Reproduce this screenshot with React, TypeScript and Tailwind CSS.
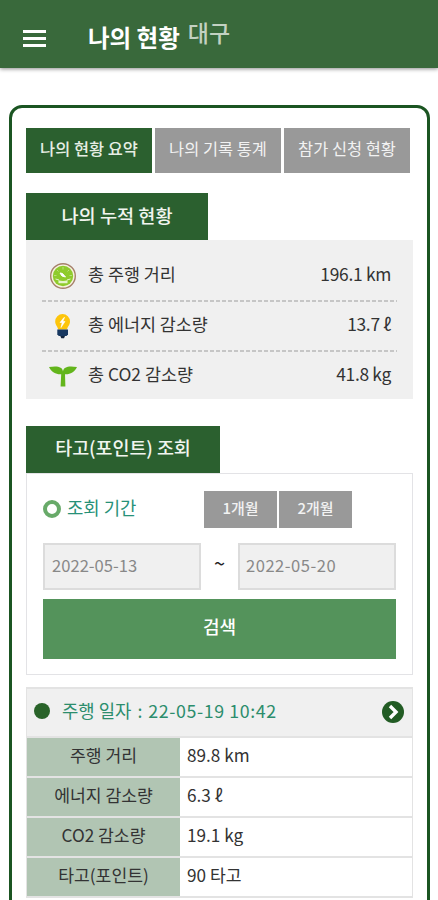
const tabs = ["나의 현황 요약", "나의 기록 통계", "참가 신청 현황"];

const record = [
    { label: "주행 거리", value: "89.8 km" },
    { label: "에너지 감소량", value: "6.3 ℓ" },
    { label: "CO2 감소량", value: "19.1 kg" },
    { label: "타고(포인트)", value: "90 타고" },
];

function GaugeIcon() {
    return (
        <svg width="28" height="28" viewBox="0 0 28 28">
            <circle cx="14" cy="14" r="12.3" fill="#f7f3df" stroke="#a5806a" strokeWidth="1.4" />
            <circle cx="14" cy="14" r="10.2" fill="#8fcb2c" />
            <path d="M14 5v2.500M8 8l1.500 1.500M20 8l-1.500 1.500M5 13.500h2.500M23 13.500h-2.500" stroke="#b9df7c" strokeWidth="1" />
            <path d="M11 11l2.500.5 3 3.500-3.500-1z" fill="#fff" stroke="#fff" />
            <path d="M9.500 18.300q4.500 1.500 9 0v3h-9z" fill="#e6f4cb" />
            <path d="M6.500 17l3.500 1M21.500 17l-3.500 1" stroke="#e6f4cb" fill="none" />
        </svg>
    )
}

function BulbIcon() {
    return (
        <svg width="28" height="28" viewBox="0 0 28 28">
            <path d="M13.500 2a7.400 7.400 0 0 0-7.300 7.400c0 3.600 2.500 4.800 3 8.100h8.800c.5-3.300 3-4.500 3-8.100A7.400 7.400 0 0 0 13.500 2z" fill="#fdc50b" />
            <path d="M15 5.500l-4 5h2.200l-1.200 5 4-6h-2.200l1.700-4z" fill="#fff" stroke="#fff" strokeWidth=".6" />
            <path d="M8.300 17.500h10.700v5l-1.500 1.500h-7.700l-1.500-1.500z" fill="#173760" />
            <path d="M11.300 24h4.700l-1 2.200h-2.700z" fill="#12243d" />
        </svg>
    )
}

function SproutIcon() {
    return (
        <svg width="28" height="28" viewBox="0 0 28 28">
            <path d="M0 5c8-1.300 13.500-.5 14 4.500.5-5 6-5.800 14-4.500-2.500 5.500-7 7.500-12 7.200l.4 12.300h-4.800l.6-12.300c-5 .3-9.700-1.700-12.200-7.200z" fill="#63b51c" />
        </svg>
    )
}

const totals = [
    { icon: <GaugeIcon />, label: "총 주행 거리", value: "196.1 km" },
    { icon: <BulbIcon />, label: "총 에너지 감소량", value: "13.7 ℓ" },
    { icon: <SproutIcon />, label: "총 CO2 감소량", value: "41.8 kg" },
];

function Header() {
    return (
        <header className="flex h-[68px] items-center bg-[#39693b] pl-[23px] text-white shadow-[0_1px_4px_rgba(0,0,0,0.45)]">
            <div className="mt-2 flex w-[23px] flex-col gap-[4px]">
                <span className="h-[3px] bg-white"></span>
                <span className="h-[3px] bg-white"></span>
                <span className="h-[3px] bg-white"></span>
            </div>
            <h1 className="ml-[42px] mt-[7px] text-[23.500px] font-bold leading-none">나의 현황</h1>
            <span className="mb-[3px] ml-[8px] text-[23px] font-medium leading-none text-[#c3d1c2]">대구</span>
        </header>
    )
}

function Summary() {
    return (
        <section>
            <h2 className="flex h-[47px] w-[182px] items-center justify-center bg-[#2b602f] pb-[4px] text-[18.600px] font-medium text-[#f1f5ef]">나의 누적 현황</h2>
            <div className="h-[159px] bg-[#f0f0f0] px-4 pt-[12px]">
                {totals.map((row, i) => (
                    <div key={row.label}>
                        <div className="flex h-[48px] items-center pl-[7px] pr-[6px] text-[17.400px] text-[#333]">
                            {row.icon}
                            <span className="mb-[3px] ml-[11px]">{row.label}</span>
                            <span className="mb-[3px] ml-auto tracking-[-0.3px]">{row.value}</span>
                        </div>
                        {i < 2 && <div className="h-[2px] bg-[repeating-linear-gradient(90deg,#c6c6c6_0_4px,transparent_4px_6px)]"></div>}
                    </div>
                ))}
            </div>
        </section>
    )
}

function Search() {
    return (
        <section className="mt-[27px]">
            <h2 className="flex h-[47px] w-[194px] items-center justify-center bg-[#2b602f] pb-[3px] text-[18.500px] font-medium tracking-[-0.1px] text-[#f1f5ef]">타고(포인트) 조회</h2>
            <div className="h-[202px] border border-[#e3e3e6] px-4 pt-[17px]">
                <div className="flex h-[37px] items-center">
                    <span className="mb-[2px] size-[18px] rounded-full border-4 border-[#68aa69]"></span>
                    <span className="mb-[4px] ml-[6px] text-[17.800px] text-[#279178]">조회 기간</span>
                    <button className="ml-auto h-full w-[73px] bg-[#999] pb-[2px] text-[15px] font-medium text-[#f2f2f2]">1개월</button>
                    <button className="ml-[2px] mr-[44px] h-full w-[73px] bg-[#999] pb-[2px] text-[15px] font-medium text-[#f2f2f2]">2개월</button>
                </div>
                <div className="mt-[15px] flex h-[47px] items-center justify-between text-[16.600px] text-[#888]">
                    <div className="flex h-full w-[158px] items-center border-2 border-[#dcdcdc] bg-[#f0f0f0] pb-[3px] pl-[7px]">2022-05-13</div>
                    <span className="mb-[7px] text-[20px] text-[#222]">~</span>
                    <div className="flex h-full w-[158px] items-center border-2 border-[#dcdcdc] bg-[#f0f0f0] pb-[3px] pl-[6px] tracking-[0.5px]">2022-05-20</div>
                </div>
                <button className="mt-[9px] h-[60px] w-[353px] bg-[#54935b] pb-[5px] text-[18px] font-medium text-white">검색</button>
            </div>
        </section>
    )
}

function Record() {
    return (
        <section className="mt-3 border border-b-2 border-t-2 border-[#e3e3e3]">
            <div className="flex h-[47px] items-center bg-[#f0f0f0] pl-[7px] pr-[8px]">
                <span className="mb-[4px] size-4 rounded-full bg-[#296329]"></span>
                <span className="mb-[4px] ml-[12px] text-[17.800px] text-[#2c8d6c]">주행 일자 <span className="mx-[2px]">:</span> <span className="tracking-[0.600px]">22-05-19 10:42</span></span>
                <svg className="mb-px ml-auto" width="22" height="22" viewBox="0 0 22 22">
                    <circle cx="11" cy="11" r="11" fill="#225c24" />
                    <path d="M8 5l6 6-6 6" fill="none" stroke="#fff" strokeWidth="3.4" />
                </svg>
            </div>
            {record.map((row) => (
                <div key={row.label} className="flex h-10 border-t-2 border-[#e3e3e3] text-[17.200px] text-[#333]">
                    <div className="flex w-[153px] items-center justify-center bg-[#b1c5b3] pb-[4px]">{row.label}</div>
                    <div className="flex items-center pb-[4px] pl-[7px]">{row.value}</div>
                </div>
            ))}
        </section>
    )
}

function App() {
    return (
        <div className="h-[900px] overflow-hidden bg-white font-['Noto_Sans_CJK_KR',sans-serif]">
            <Header />
            <main className="ml-[9px] mt-[37px] h-[900px] w-[421px] rounded-[13px] border-[3px] border-[#1b5522] pl-[14px] pr-[14px] pt-5">
                <div className="mb-5 flex h-[45px] gap-[3px]">
                    {tabs.map((tab, i) => (
                        <button key={tab} className={i === 0 ? "w-[126px] bg-[#2b602f] pb-[4px] text-[16.400px] font-medium text-[#e6eee4]" : "w-[126px] bg-[#999] pb-[4px] text-[16.400px] text-[#f2f2f2]"}>{tab}</button>
                    ))}
                </div>
                <Summary />
                <Search />
                <Record />
            </main>
        </div>
    )
}

export default App;
